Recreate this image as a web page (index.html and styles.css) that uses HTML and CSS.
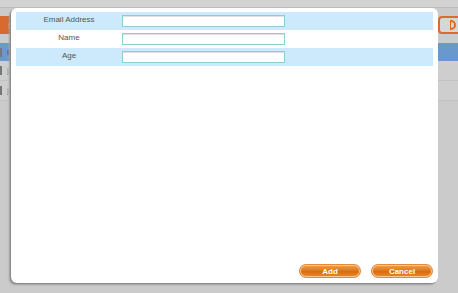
FILE: index.html
```html
<!DOCTYPE html>
<html lang="en">

<head>
    <meta charset="UTF-8">
    <title>Add record</title>
    <link rel="stylesheet" href="styles.css">
</head>

<body>

    <!-- pagina de fondo -->
    <div class="page">
        <div class="topbar"></div>
        <div class="header">
            <span class="hdr-text">S</span>
            <span class="hdr-btn"><span class="hdr-arrow"></span></span>
        </div>
        <div class="row-sel"><span class="chk"></span><span class="cell">E</span></div>
        <div class="row"><span class="chk"></span><span class="cell">j</span></div>
        <div class="row"><span class="chk"></span><span class="cell">j</span></div>
    </div>

    <!-- dialogo -->
    <div class="dialog">
        <table class="form">
            <tr class="alt">
                <td class="lbl">Email Address</td>
                <td><input class="field" type="text"></td>
            </tr>
            <tr>
                <td class="lbl">Name</td>
                <td><input class="field" type="text"></td>
            </tr>
            <tr class="alt">
                <td class="lbl">Age</td>
                <td><input class="field" type="text"></td>
            </tr>
        </table>
        <div class="actions">
            <button class="btn">Add</button>
            <button class="btn">Cancel</button>
        </div>
    </div>

</body>

</html>
```

FILE: styles.css
```css
* {
    box-sizing: border-box;
}

body {
    margin: 0;
    width: 458px;
    height: 293px;
    overflow: hidden;
    background: #cbcbcb;
    font-family: "Liberation Sans", Arial, sans-serif;
    position: relative;
}

.topbar {
    height: 8px;
    border-bottom: 1px solid #bdbdbd;
    background: #d2d2d2;
}

.header {
    margin-top: 8px;
    height: 18px;
    display: flex;
    justify-content: space-between;
    align-items: center;
    background: linear-gradient(to right, #d5692e 0, #d5692e 12px, transparent 12px);
}

.hdr-text {
    color: #f3c9a8;
    font-size: 8px;
    padding-left: 8px;
}

.hdr-btn {
    position: relative;
    width: 20px;
    height: 18px;
    border: 2px solid #dc6a2a;
    border-right: none;
    border-radius: 4px 0 0 4px;
    background: #d6d6d6;
}

.hdr-arrow {
    position: absolute;
    right: 2px;
    top: 2px;
    width: 6px;
    height: 10px;
    border: 2px solid #dc6a2a;
    border-left: 1px solid #dc6a2a;
    border-radius: 0 6px 6px 0;
}

.row-sel {
    margin-top: 9px;
    height: 18px;
    background: #6898cc;
    display: flex;
    align-items: center;
}

.row {
    height: 20px;
    display: flex;
    align-items: center;
    border-bottom: 1px solid #c2c2c2;
    background: #cecece;
}

.chk {
    width: 2px;
    height: 9px;
    background: #777;
}

.cell {
    font-size: 8px;
    color: #888;
    margin-left: 5px;
}

.row-sel .cell {
    color: #b04020;
}

.dialog {
    position: absolute;
    left: 11px;
    top: 8px;
    width: 427px;
    height: 275px;
    background: #fff;
    border-radius: 6px;
    box-shadow: -1px 1px 1px #888, -2px 2px 2px #a5a5a5;
    padding: 4px 5px;
    display: flex;
    flex-direction: column;
}

.form {
    width: 100%;
    border-collapse: collapse;
}

.form td {
    height: 18px;
    padding: 0;
}

.form tr.alt td {
    background: #cceafb;
}

.lbl {
    width: 106px;
    text-align: center;
    font-size: 8px;
    color: #555;
    vertical-align: top;
    padding-top: 3px !important;
}

.field {
    display: block;
    width: 163px;
    height: 12px;
    border: 1px solid #8ccfce;
    background: #fff;
    box-shadow: inset 0 1px 0 #e0e0e0;
    margin: 0;
}

.actions {
    margin-top: auto;
    display: flex;
    justify-content: flex-end;
    gap: 10px;
    padding-bottom: 1px;
}

.btn {
    width: 62px;
    height: 14px;
    border: 1px solid #e08a3a;
    border-radius: 7px;
    background: linear-gradient(to bottom, #f3a04a 0, #e07a1e 45%, #d86c10 55%, #ea8a2c 100%);
    box-shadow: inset 0 0 0 1px #f8c890;
    color: #fff;
    font-family: "Liberation Sans", Arial, sans-serif;
    font-size: 8px;
    font-weight: bold;
    padding: 0;
}
```
